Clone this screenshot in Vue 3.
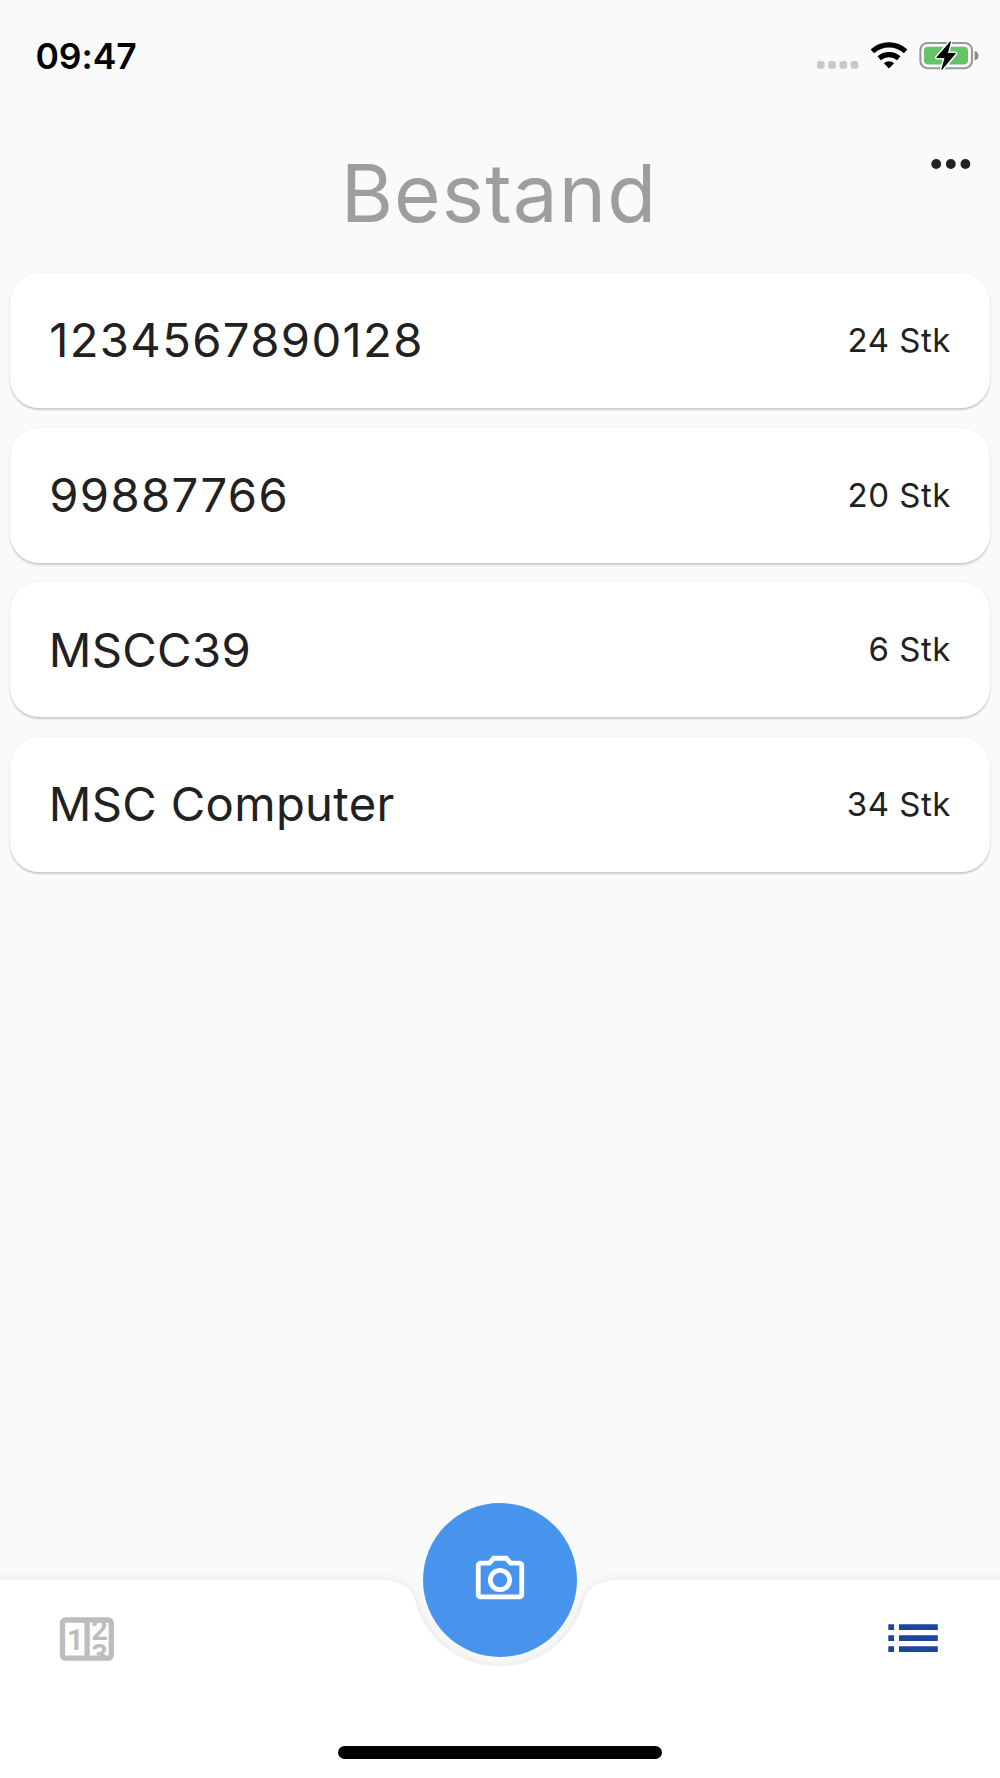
<script setup>
const items = [
  { name: '1234567890128', amount: '24 Stk' },
  { name: '99887766', amount: '20 Stk' },
  { name: 'MSCC39', amount: '6 Stk' },
  { name: 'MSC Computer', amount: '34 Stk' },
]

const isNumeric = (name) => /^\d+$/.test(name)
</script>

<template>
  <div class="screen">
    <div class="status">
      <span class="time">09:47</span>
      <svg class="status-icons" width="170" height="36" viewBox="810 36 170 36">
        <g fill="#c8c8c8">
          <rect x="817" y="61" width="7.6" height="7.8" rx="2.6" />
          <rect x="828.2" y="61" width="7.6" height="7.8" rx="2.6" />
          <rect x="839.5" y="61" width="7.6" height="7.8" rx="2.6" />
          <rect x="850.7" y="61" width="7.6" height="7.8" rx="2.6" />
        </g>
        <g fill="none" stroke="#000" stroke-width="5.2">
          <path d="M872.4 51.4A24.6 24.6 0 0 1 905.6 51.4" />
          <path d="M879.2 58.3A14.8 14.8 0 0 1 898.8 58.3" />
        </g>
        <path d="M889 68.4L883.9 63.2A7.8 7.8 0 0 1 894.1 63.2Z" />
        <rect x="920.4" y="43" width="51.6" height="25.2" rx="7.2" fill="none" stroke="#999" stroke-width="2.1" />
        <path d="M974.6 51A4.8 4.8 0 0 1 974.6 60.4Z" fill="#8c8c8c" />
        <rect x="924" y="46.8" width="44" height="17.6" rx="3.8" fill="#65c466" />
        <path d="M950.4 41.8L936.8 57.6H945.2L941.8 69.4L955.4 53.4H947.4Z" stroke="#fafafa" stroke-width="3.8" stroke-linejoin="round" />
        <path d="M950.4 41.8L936.8 57.6H945.2L941.8 69.4L955.4 53.4H947.4Z" stroke="#000" stroke-width="1" stroke-linejoin="round" />
      </svg>
    </div>

    <header class="header">
      <h1>Bestand</h1>
      <button class="more" aria-label="Menu">
        <svg width="40" height="12" viewBox="0 0 40 12" fill="#212121">
          <circle cx="5.2" cy="6" r="4.9" />
          <circle cx="19.8" cy="6" r="4.9" />
          <circle cx="34.4" cy="6" r="4.9" />
        </svg>
      </button>
    </header>

    <main class="list">
      <div v-for="item in items" :key="item.name" class="card">
        <span class="name" :class="{ numeric: isNumeric(item.name) }">{{ item.name }}</span>
        <span class="amount">{{ item.amount }}</span>
      </div>
    </main>

    <nav class="bar">
      <svg class="bar-shape" width="1000" height="230" viewBox="0 -31.7 1000 230">
        <path d="M-30 0H373.9Q410.1 0 414.9 20A87 87 0 0 0 584.1 20Q588.9 0 625.1 0H1030V240H-30Z" fill="#fff" />
      </svg>
      <button class="fab" aria-label="Scan">
        <svg width="58" height="58" viewBox="0 0 24 24" fill="#fff">
          <path d="M20 4h-3.17L15 2H9L7.17 4H4c-1.1 0-2 .9-2 2v12c0 1.1.9 2 2 2h16c1.1 0 2-.9 2-2V6c0-1.1-.9-2-2-2zm0 14H4V6h4.05l1.83-2h4.24l1.83 2H20v12zM12 7c-2.76 0-5 2.24-5 5s2.24 5 5 5 5-2.24 5-5-2.24-5-5-5zm0 8c-1.65 0-3-1.35-3-3s1.35-3 3-3 3 1.35 3 3-1.35 3-3 3z" />
        </svg>
      </button>
      <div class="tabs">
        <svg width="56" height="46" viewBox="59 1616 56 46">
          <defs>
            <clipPath id="reel"><rect x="90" y="1622.3" width="19" height="33.6" /></clipPath>
          </defs>
          <rect x="62.5" y="1620" width="48.8" height="38.2" rx="3" fill="none" stroke="#bdbdbd" stroke-width="5.3" />
          <rect x="84.4" y="1619" width="5.4" height="40" fill="#bdbdbd" />
          <g class="digits" fill="#bdbdbd">
            <text x="67" y="1650">1</text>
            <g clip-path="url(#reel)">
              <text x="91.2" y="1640">2</text>
              <text x="91.2" y="1664.8">3</text>
            </g>
          </g>
        </svg>
        <svg width="50" height="29" viewBox="888 1624 50 29" fill="#1e459c">
          <path d="M888.3 1624.2h5.8v5.8h-5.8zM888.3 1635.2h5.8v5.8h-5.8zM888.3 1646.2h5.8v5.8h-5.8zM899 1624.2h38.8v5.8H899zM899 1635.2h38.8v5.8H899zM899 1646.2h38.8v5.8H899z" />
        </svg>
      </div>
      <div class="home"></div>
    </nav>
  </div>
</template>

<style>
body {
  margin: 0;
  background: #fafafa;
}
</style>

<style scoped>
.screen {
  width: 1000px;
  height: 1778px;
  display: flex;
  flex-direction: column;
  overflow: hidden;
  background: #fafafa;
  color: #212121;
  font-family: Inter, "Liberation Sans", sans-serif;
}
.status {
  height: 112px;
  box-sizing: border-box;
  padding: 0 20px 0 35.5px;
  display: flex;
  align-items: center;
  justify-content: space-between;
}
.time {
  color: #000;
  font-size: 35.5px;
  font-weight: 600;
  letter-spacing: -0.1px;
}
.status-icons {
  margin-bottom: 4px;
}
.header {
  position: relative;
  height: 161px;
  display: flex;
  align-items: center;
  justify-content: center;
}
h1 {
  margin: 0 2px 0 0;
  font-size: 80px;
  font-weight: 400;
  line-height: 96px;
  letter-spacing: 1.1px;
  color: #9e9e9e;
}
button {
  border: 0;
  padding: 0;
  background: none;
  display: flex;
  align-items: center;
  justify-content: center;
}
.more {
  position: absolute;
  right: 29px;
  top: 46px;
}
.list {
  flex: 1;
  display: flex;
  flex-direction: column;
  gap: 19.3px;
  padding: 0 9.7px;
}
.card {
  height: 135.3px;
  box-sizing: border-box;
  padding: 0 39.5px 1.4px 39px;
  display: flex;
  align-items: center;
  justify-content: space-between;
  border-radius: 29px;
  background: #fff;
  box-shadow: 0 2px 2px rgba(0, 0, 0, 0.18), 0 0 3px rgba(0, 0, 0, 0.05);
}
.name {
  font-size: 47.2px;
  letter-spacing: 0.35px;
}
.name.numeric {
  margin-left: 0.5px;
  letter-spacing: 1.35px;
}
.amount {
  font-size: 33px;
  letter-spacing: 0.5px;
}
.bar {
  position: relative;
  height: 198.3px;
  display: flex;
  flex-direction: column;
  align-items: center;
  justify-content: space-between;
}
.bar-shape {
  position: absolute;
  left: 0;
  top: -31.7px;
  overflow: visible;
  filter: drop-shadow(0 1px 6px rgba(0, 0, 0, 0.1));
}
.fab {
  position: absolute;
  left: 422.6px;
  top: -77.1px;
  width: 154.2px;
  height: 154.2px;
  border-radius: 50%;
  background: #4894ed;
}
.tabs {
  position: relative;
  align-self: stretch;
  height: 118px;
  padding: 0 62px 0 59px;
  display: flex;
  align-items: center;
  justify-content: space-between;
}
.digits {
  font: 700 29px Roboto, sans-serif;
}
.home {
  position: relative;
  width: 324px;
  height: 12.6px;
  margin-bottom: 19.4px;
  border-radius: 7px;
  background: #000;
}
</style>
